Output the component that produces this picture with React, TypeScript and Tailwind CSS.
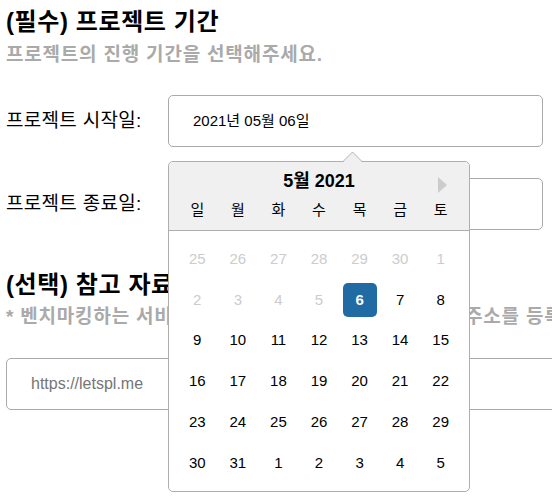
import React from "react";

const rows: { d: number; muted?: boolean; selected?: boolean }[][] = [
  [25, 26, 27, 28, 29, 30, 1].map((d) => ({ d, muted: true })),
  [
    { d: 2, muted: true },
    { d: 3, muted: true },
    { d: 4, muted: true },
    { d: 5, muted: true },
    { d: 6, selected: true },
    { d: 7 },
    { d: 8 },
  ],
  [9, 10, 11, 12, 13, 14, 15].map((d) => ({ d })),
  [16, 17, 18, 19, 20, 21, 22].map((d) => ({ d })),
  [23, 24, 25, 26, 27, 28, 29].map((d) => ({ d })),
  [30, 31, 1, 2, 3, 4, 5].map((d) => ({ d })),
];

const dayNames = ["일", "월", "화", "수", "목", "금", "토"];

function Calendar() {
  return (
    <div className="absolute left-0 top-[66px] z-10 w-[302px] rounded-[5px] border border-[#aeaeae] bg-white">
      <svg
        className="absolute left-[173px] top-[-11px]"
        width="21"
        height="12"
        viewBox="0 0 21 12"
      >
        <polygon points="0,12 10.5,1.5 21,12" fill="#f0f0f0" />
        <polyline
          points="0.5,11 10.5,1 20.5,11"
          fill="none"
          stroke="#aeaeae"
          strokeWidth="1"
        />
      </svg>
      <div className="relative rounded-t-[5px] border-b border-[#aeaeae] bg-[#f0f0f0] pt-[8px] pb-[2px]">
        <div className="text-center text-[18px] font-bold leading-[22px]">5월 2021</div>
        <svg
          className="absolute left-[269px] top-[15px]"
          width="9"
          height="16"
          viewBox="0 0 9 16"
        >
          <polygon points="0,0 9,8 0,16" fill="#cccccc" />
        </svg>
        <div className="mx-[8px] grid h-[36px] grid-cols-7 items-center text-center text-[15px]">
          {dayNames.map((n) => (
            <div key={n}>{n}</div>
          ))}
        </div>
      </div>
      <div className="px-[8px] py-[8px]">
        {rows.map((row, i) => (
          <div key={i} className="grid h-[40.7px] grid-cols-7 items-center text-[15px]">
            {row.map((c, j) => (
              <div key={j} className="flex items-center justify-center">
                {c.selected ? (
                  <div className="flex h-[34px] w-[34px] items-center justify-center rounded-[5px] bg-[#216ba5] font-bold text-white">
                    {c.d}
                  </div>
                ) : (
                  <div className={c.muted ? "text-[#cccccc]" : "text-black"}>{c.d}</div>
                )}
              </div>
            ))}
          </div>
        ))}
      </div>
    </div>
  );
}

export default function App() {
  return (
    <div className="relative h-[502px] w-[552px] overflow-hidden bg-white text-black font-['Liberation_Sans','Noto_Sans_CJK_KR',sans-serif]">
      <div className="pl-[6px] pt-[6px]">
        <h2 className="text-[24px] font-bold leading-[32px] tracking-[0.6px]">(필수) 프로젝트 기간</h2>
        <p className="mt-[5px] text-[19px] font-bold leading-[24px] tracking-[0.8px] text-[#aaaaaa]">
          프로젝트의 진행 기간을 선택해주세요.
        </p>

        <div className="mt-[28px] flex items-center">
          <div className="w-[162px] text-[19px] tracking-[0.3px]">프로젝트 시작일:</div>
          <div className="relative">
            <div className="flex h-[52px] w-[375px] items-center rounded-[5px] border border-[#aaaaaa] pl-[24px] text-[15px]">
              2021년 05월 06일
            </div>
            <Calendar />
          </div>
        </div>

        <div className="mt-[31px] flex items-center">
          <div className="w-[162px] text-[19px] tracking-[0.3px]">프로젝트 종료일:</div>
          <div className="h-[52px] w-[375px] rounded-[5px] border border-[#aaaaaa]" />
        </div>

        <h2 className="mt-[39px] text-[24px] font-bold leading-[32px] tracking-[0.6px]">(선택) 참고 자료 링크</h2>
        <p className="mt-[4px] whitespace-nowrap text-[19px] font-bold leading-[24px] tracking-[0.8px] text-[#aaaaaa]">
          {"* 벤치마킹하는 서비스나 참고하고 있는 서비스의 링크\u00a0 주소를 등록해주세요."}
        </p>

        <div className="mt-[29px] flex h-[52px] w-[600px] items-center rounded-[5px] border border-[#aaaaaa] pl-[24px] text-[16px] text-[#757575]">
          https://letspl.me
        </div>
      </div>
    </div>
  );
}
